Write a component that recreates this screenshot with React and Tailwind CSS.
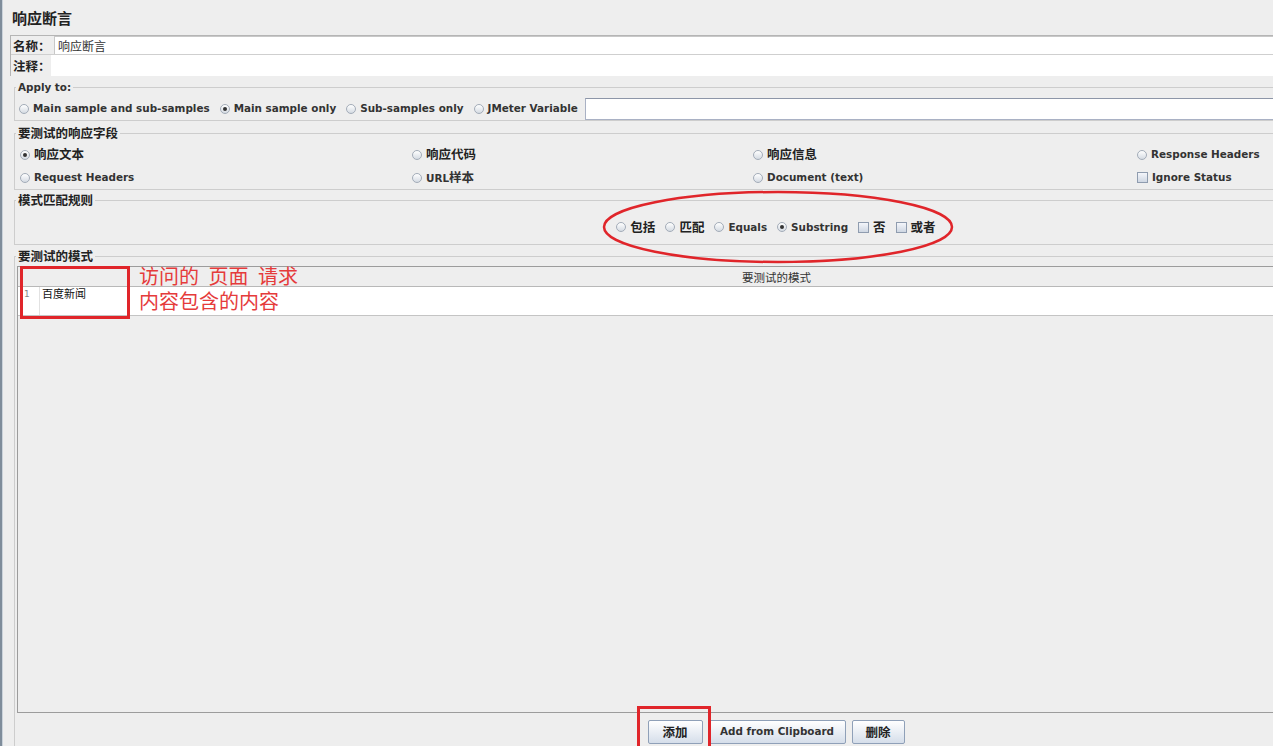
import React from "react";

const FONT = "font-['DejaVu_Sans','Noto_Sans_CJK_SC',sans-serif]";
const CJK = "font-['Noto_Sans_CJK_SC',sans-serif]";

function Radio({ checked }) {
  return (
    <span className="w-[10px] h-[10px] shrink-0 rounded-full border border-[#a3acb8] bg-gradient-to-b from-white to-[#d5dbe3] flex items-center justify-center">
      {checked && <span className="w-[4px] h-[4px] rounded-full bg-[#333]" />}
    </span>
  );
}

function Check() {
  return (
    <span className="w-[11px] h-[11px] shrink-0 border border-[#8f9caf] bg-gradient-to-b from-[#f4f6fa] to-[#cfd7e3]" />
  );
}

function Opt({ type = "radio", checked, children, cjk, className = "" }) {
  return (
    <div className={`flex items-center gap-[4px] ${className}`}>
      {type === "radio" ? <Radio checked={checked} /> : <Check />}
      <span
        className={
          cjk
            ? `${CJK} text-[12.5px] font-bold text-[#222] leading-none`
            : "text-[10.4px] font-bold text-[#333] leading-none"
        }
      >
        {children}
      </span>
    </div>
  );
}

function Legend({ children }) {
  return (
    <legend className={`${CJK} ml-[1px] px-[2px] text-[12.5px] font-bold text-[#222] leading-[14px]`}>
      {children}
    </legend>
  );
}

export default function App() {
  return (
    <div className={`w-[1273px] h-[746px] overflow-hidden bg-[#eeeeee] relative flex ${FONT}`}>
      {/* left edge of the window */}
      <div className="w-[2px] shrink-0 bg-[#7f8d9b]" />
      <div className="w-[1px] shrink-0 bg-[#cbd3db]" />

      <div className="w-[1535px] shrink-0 flex flex-col pl-[7px]">
        {/* Title */}
        <div className={`${CJK} h-[35px] pt-[10px] pl-[2px] text-[15px] font-bold leading-[16px] text-[#222]`}>
          响应断言
        </div>

        {/* Name / comment */}
        <div className="border-t border-l border-[#b5b5b5]">
          <div className="flex h-[19px] border-b border-[#cfcfcf]">
            <div className={`${CJK} w-[43px] pl-[2px] text-[12.5px] font-bold leading-[19px] text-[#222]`}>名称：</div>
            <div className={`${CJK} flex-1 bg-white border-l border-t border-[#c8c8c8] pl-[3px] text-[12px] leading-[17px] text-[#333]`}>
              响应断言
            </div>
          </div>
          <div className="flex h-[21px]">
            <div className={`${CJK} w-[40px] pl-[2px] text-[12.5px] font-bold leading-[21px] text-[#222]`}>注释：</div>
            <div className="flex-1 bg-white" />
          </div>
        </div>

        {/* Apply to */}
        <fieldset className="mt-[4px] ml-[4px] border border-[#cdcdcd]">
          <legend className="ml-[1px] px-[2px] text-[10.4px] font-bold text-[#333] leading-[14px]">Apply to:</legend>
          <div className="flex items-center h-[23px] mt-[3px] pl-[4px]">
            <Opt className="mr-[10px]">Main sample and sub-samples</Opt>
            <Opt checked className="mr-[10px]">Main sample only</Opt>
            <Opt className="mr-[10px]">Sub-samples only</Opt>
            <Opt className="mr-[7px]">JMeter Variable</Opt>
            <div className="flex-1 h-[22px] bg-white border border-[#a9b1c4] border-t-[#8d96a8] border-r-0" />
          </div>
        </fieldset>

        {/* Response field */}
        <fieldset className="mt-[5px] ml-[4px] border border-[#cdcdcd]">
          <Legend>要测试的响应字段</Legend>
          <div className="grid grid-cols-[392px_341px_384px_1fr] pl-[5px] mt-[3px]">
            <Opt checked cjk className="h-[23px]">响应文本</Opt>
            <Opt cjk className="h-[23px]">响应代码</Opt>
            <Opt cjk className="h-[23px]">响应信息</Opt>
            <Opt className="h-[23px]">Response Headers</Opt>
            <Opt className="h-[23px]">Request Headers</Opt>
            <Opt className="h-[23px]">
              URL<span className={`${CJK} text-[12.5px]`}>样本</span>
            </Opt>
            <Opt className="h-[23px]">Document (text)</Opt>
            <Opt type="check" className="h-[23px]">Ignore Status</Opt>
          </div>
        </fieldset>

        {/* Pattern matching rules */}
        <fieldset className="mt-[3px] ml-[4px] border border-[#cdcdcd]">
          <Legend>模式匹配规则</Legend>
          <div className="flex items-center justify-center h-[24px] mt-[8px] mb-[5px] gap-[10px]">
            <Opt cjk>包括</Opt>
            <Opt cjk>匹配</Opt>
            <Opt>Equals</Opt>
            <Opt checked>Substring</Opt>
            <Opt type="check" cjk>否</Opt>
            <Opt type="check" cjk>或者</Opt>
          </div>
        </fieldset>

        {/* Patterns to test */}
        <fieldset className="mt-[4px] ml-[4px] border border-[#cdcdcd] border-b-0 flex-1">
          <Legend>要测试的模式</Legend>
          <div className="mt-[3px] ml-[2px] mr-[2px] h-[447px] border-t border-l border-b border-[#9c9c9c] flex flex-col">
            <div className={`${CJK} h-[20px] border-b border-[#b8b8b8] bg-[#eeeeee] text-center text-[11.5px] leading-[20px] text-[#333]`}>
              要测试的模式
            </div>
            <div className="h-[29px] flex bg-white border-b border-[#c4c4c4]">
              <div className="w-[22px] border-r border-[#e2e2e2] pl-[6px] text-[9px] leading-[14px] text-[#888]">1</div>
              <div className={`${CJK} flex-1 pl-[2px] text-[11px] leading-[12px] text-[#111]`}>百度新闻</div>
            </div>
            <div className="flex-1" />
          </div>
          <div className="flex justify-center gap-[6px] mt-[7px]">
            <button className={`${CJK} w-[55px] h-[24px] border border-[#8fa0b8] rounded-[2px] bg-gradient-to-b from-white to-[#d5deea] text-[12.5px] font-bold text-[#222]`}>
              添加
            </button>
            <button className="w-[137px] h-[24px] border border-[#8fa0b8] rounded-[2px] bg-gradient-to-b from-white to-[#d5deea] text-[10.4px] font-bold text-[#333]">
              Add from Clipboard
            </button>
            <button className={`${CJK} w-[53px] h-[24px] border border-[#8fa0b8] rounded-[2px] bg-gradient-to-b from-white to-[#d5deea] text-[12.5px] font-bold text-[#222]`}>
              删除
            </button>
          </div>
        </fieldset>
      </div>

      {/* Red annotations drawn over the screenshot */}
      <div className="absolute left-[20px] top-[266px] w-[110px] h-[53px] border-[3px] border-[#e0252a]" />
      <div className={`${CJK} absolute left-[139px] top-[263px] text-[20px] leading-[25px] text-[#e53b3b] [word-spacing:5px]`}>
        <div>访问的 页面 请求</div>
        <div>内容包含的内容</div>
      </div>
      <svg className="absolute left-[600px] top-[189px]" width="358" height="78" viewBox="0 0 358 78">
        <ellipse cx="178" cy="38" rx="174" ry="35" fill="none" stroke="#e0252a" strokeWidth="2.5" />
      </svg>
      <div className="absolute left-[637px] top-[706px] w-[74px] h-[44px] border-[3px] border-[#e0252a]" />
    </div>
  );
}
